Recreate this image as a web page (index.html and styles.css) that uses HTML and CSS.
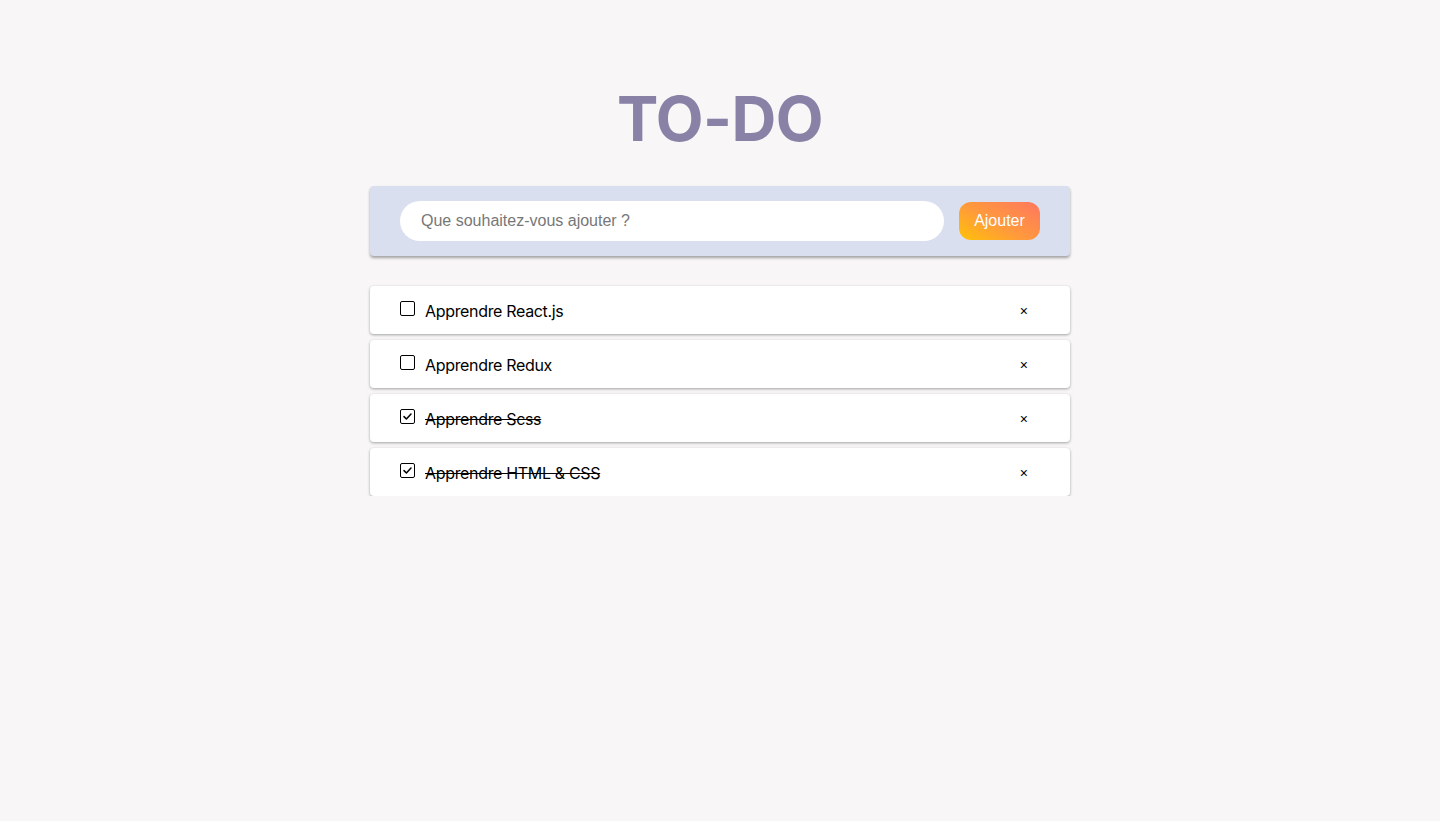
FILE: index.html
```html
<!DOCTYPE html>
<html lang="fr">
<head>
<meta charset="utf-8">
<title>TO-DO</title>
<link rel="stylesheet" href="styles.css">
</head>
<body>
<main class="app">
  <h1 class="title">TO-DO</h1>
  <form class="add-form">
    <input class="add-input" type="text" placeholder="Que souhaitez-vous ajouter ?">
    <button class="add-btn" type="button">Ajouter</button>
  </form>
  <ul class="list">
    <li class="item">
      <span class="check"></span>
      <span class="label">Apprendre React.js</span>
      <span class="remove">×</span>
    </li>
    <li class="item">
      <span class="check"></span>
      <span class="label">Apprendre Redux</span>
      <span class="remove">×</span>
    </li>
    <li class="item done">
      <span class="check"><svg viewBox="0 0 15 15" width="15" height="15"><path d="M4 7.6 L6.4 10 L11 5" fill="none" stroke="#000" stroke-width="1.5" stroke-linecap="round" stroke-linejoin="round"/></svg></span>
      <span class="label">Apprendre Scss</span>
      <span class="remove">×</span>
    </li>
    <li class="item done">
      <span class="check"><svg viewBox="0 0 15 15" width="15" height="15"><path d="M4 7.6 L6.4 10 L11 5" fill="none" stroke="#000" stroke-width="1.5" stroke-linecap="round" stroke-linejoin="round"/></svg></span>
      <span class="label">Apprendre HTML &amp; CSS</span>
      <span class="remove">×</span>
    </li>
  </ul>
</main>
</body>
</html>
```

FILE: styles.css
```css
* { box-sizing: border-box; }
html, body { margin: 0; padding: 0; }
body {
  background: #f8f6f7;
  font-family: Inter, "Liberation Sans", sans-serif;
  color: #000;
}
.app {
  width: 700px;
  margin: 0 auto;
  padding-top: 79px;
}
.title {
  margin: 0;
  text-align: center;
  font-family: Inter, sans-serif;
  font-weight: 700;
  font-size: 62px;
  line-height: 80px;
  color: #8a82a6;
  letter-spacing: -0.5px;
}
.add-form {
  margin-top: 27px;
  height: 70px;
  background: #d9dfee;
  border-radius: 4px;
  box-shadow: 0 2px 3px rgba(0,0,0,0.35);
  display: flex;
  align-items: center;
  padding: 0 30px;
  gap: 15px;
}
.add-input {
  flex: 1;
  height: 40px;
  border: none;
  border-radius: 20px;
  background: #fff;
  padding: 0 21px;
  font-family: "Liberation Sans", Arial, sans-serif;
  font-size: 16px;
  outline: none;
}
.add-input::placeholder { color: #777; }
.add-btn {
  width: 81px;
  height: 38px;
  border: none;
  border-radius: 12px;
  background: linear-gradient(30deg, #ffc107 0%, #ff9a3c 45%, #ff7760 100%);
  color: #fff;
  font-family: "Liberation Sans", Arial, sans-serif;
  font-size: 16px;
  padding: 0;
}
.list {
  list-style: none;
  margin: 30px 0 0;
  padding: 0;
  display: flex;
  flex-direction: column;
  gap: 6px;
}
.item {
  height: 48px;
  background: #fff;
  border-radius: 4px;
  box-shadow: 0 1px 3px rgba(0,0,0,0.35);
  display: flex;
  align-items: center;
  padding: 0 30px;
}
.check {
  width: 15px;
  height: 15px;
  border: 1.3px solid #000;
  border-radius: 2px;
  display: flex;
  align-items: center;
  justify-content: center;
  margin-top: -4px;
  flex: none;
}
.check svg { display: block; margin: -1px; }
.label {
  margin-left: 10px;
  font-size: 16px;
  letter-spacing: -0.33px;
  flex: 1;
  margin-top: 1px;
}
.done .label { text-decoration: line-through; }
.remove {
  font-family: "Liberation Sans", Arial, sans-serif;
  font-size: 14px;
  margin-right: 12px;
  margin-top: 1px;
}
```
